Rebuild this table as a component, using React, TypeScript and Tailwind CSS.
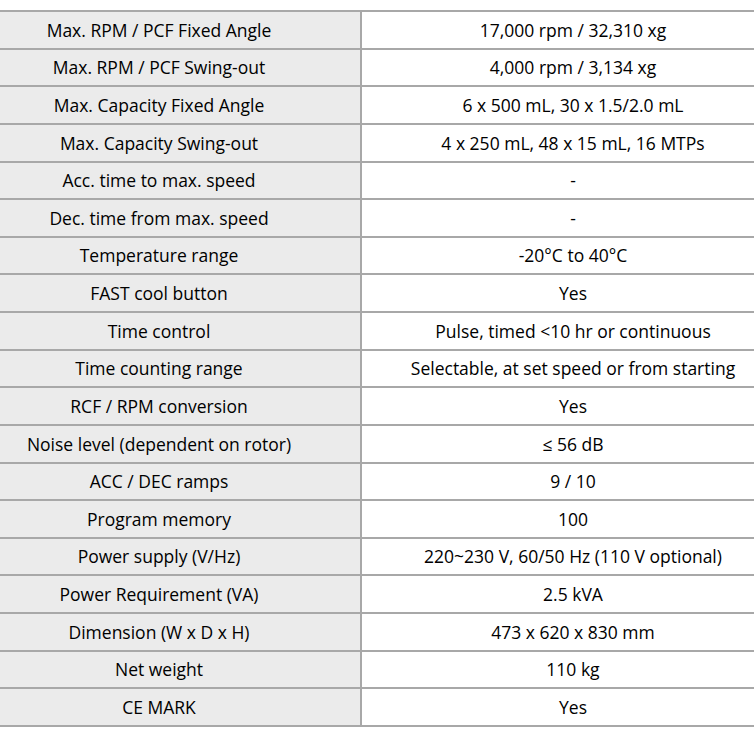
const specs: [string, string][] = [
  ['Max. RPM / PCF Fixed Angle', '17,000 rpm / 32,310 xg'],
  ['Max. RPM / PCF Swing-out', '4,000 rpm / 3,134 xg'],
  ['Max. Capacity Fixed Angle', '6 x 500 mL, 30 x 1.5/2.0 mL'],
  ['Max. Capacity Swing-out', '4 x 250 mL, 48 x 15 mL, 16 MTPs'],
  ['Acc. time to max. speed', '-'],
  ['Dec. time from max. speed', '-'],
  ['Temperature range', '-20°C to 40°C'],
  ['FAST cool button', 'Yes'],
  ['Time control', 'Pulse, timed <10 hr or continuous'],
  ['Time counting range', 'Selectable, at set speed or from starting'],
  ['RCF / RPM conversion', 'Yes'],
  ['Noise level (dependent on rotor)', '≤ 56 dB'],
  ['ACC / DEC ramps', '9 / 10'],
  ['Program memory', '100'],
  ['Power supply (V/Hz)', '220~230 V, 60/50 Hz (110 V optional)'],
  ['Power Requirement (VA)', '2.5 kVA'],
  ['Dimension (W x D x H)', '473 x 620 x 830 mm'],
  ['Net weight', '110 kg'],
  ['CE MARK', 'Yes'],
];

export default function App() {
  return (
    <div className="w-[754px] h-[733px] bg-white pt-[10px] font-['Open_Sans',sans-serif] text-[17.5px] text-black overflow-hidden">
      <div className="border-t-2 border-[#a8a8a8]">
        {specs.map(([label, value]) => (
          <div key={label} className="flex h-[37.63px] border-b-2 border-[#a8a8a8]">
            <div className="w-[362px] bg-[#ebebeb] border-r-2 border-[#a8a8a8] flex items-center justify-center pr-[42px] whitespace-nowrap">
              {label}
            </div>
            <div className="flex-1 flex items-center justify-center pl-[30px] whitespace-nowrap">{value}</div>
          </div>
        ))}
      </div>
    </div>
  );
}
